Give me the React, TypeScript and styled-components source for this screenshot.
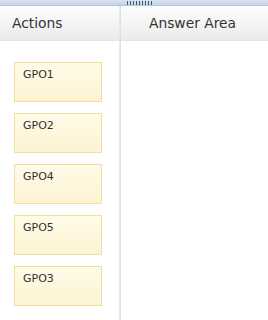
import React from 'react'
import styled, { createGlobalStyle } from 'styled-components'

const GlobalStyle = createGlobalStyle`
  html, body {
    margin: 0;
    padding: 0;
    background: #ffffff;
  }
  body {
    font-family: "DejaVu Sans", Verdana, sans-serif;
    color: #333333;
  }
`

const Frame = styled.div`
  width: 268px;
  height: 320px;
  display: flex;
  flex-direction: column;
  overflow: hidden;
`

const TopBar = styled.div`
  height: 5px;
  background: linear-gradient(#dbe5ef, #c3d2e2);
  border-bottom: 1px solid #b6c8da;
  display: flex;
  justify-content: center;
  align-items: center;
`

const Grip = styled.div`
  width: 28px;
  height: 4px;
  margin-left: 12px;
  background-image: radial-gradient(circle, #3f5878 0.9px, transparent 1.1px);
  background-size: 3px 2px;
`

const Columns = styled.div`
  flex: 1;
  display: grid;
  grid-template-columns: 119px 2px 1fr;
`

const Column = styled.div`
  display: flex;
  flex-direction: column;
`

const Divider = styled.div`
  background: linear-gradient(90deg, #e6edf5, #d3dfec);
`

const Header = styled.div<{ $pad: number }>`
  height: 34px;
  display: flex;
  align-items: center;
  padding-left: ${({ $pad }) => $pad}px;
  font-size: 13.8px;
  color: #333333;
  background: linear-gradient(#fdfdfd, #ebebeb);
  border-bottom: 1px solid #e4e4e4;
`

const List = styled.div`
  display: flex;
  flex-direction: column;
  gap: 11px;
  padding: 21px 0 0 14px;
`

const Item = styled.div`
  width: 88px;
  height: 40px;
  box-sizing: border-box;
  border: 1px solid #f1df9f;
  background: linear-gradient(#fffbe8, #fdf3d3);
  padding: 5px 0 0 8px;
  font-size: 11px;
  color: #333333;
`

const items = ['GPO1', 'GPO2', 'GPO4', 'GPO5', 'GPO3']

export default function App() {
  return (
    <Frame>
      <GlobalStyle />
      <TopBar>
        <Grip />
      </TopBar>
      <Columns>
        <Column>
          <Header $pad={12}>Actions</Header>
          <List>
            {items.map((name) => (
              <Item key={name}>{name}</Item>
            ))}
          </List>
        </Column>
        <Divider />
        <Column>
          <Header $pad={28}>Answer Area</Header>
        </Column>
      </Columns>
    </Frame>
  )
}
